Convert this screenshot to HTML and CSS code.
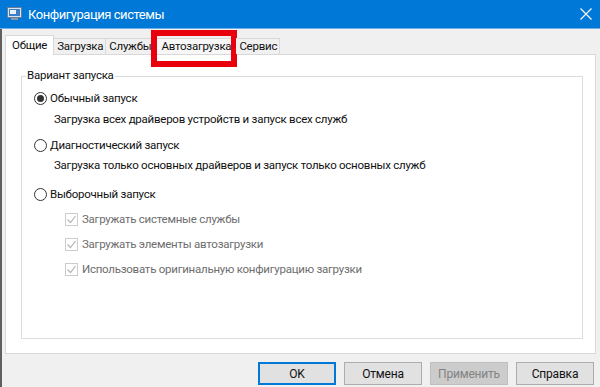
FILE: index.html
```html
<!DOCTYPE html>
<html lang="ru">
<head>
    <meta charset="UTF-8">
    <title>Конфигурация системы</title>
    <link rel="stylesheet" href="styles.css">
</head>
<body>
    <div class="window">
        <div class="titlebar">
            <svg class="app-icon" width="15" height="14" viewBox="0 0 15 14">
                <rect x="0.5" y="0.5" width="14" height="10" fill="#d8e4f0" stroke="#6a7f97"/>
                <rect x="2" y="2" width="11" height="7" fill="#3d7fc6"/>
                <rect x="3" y="3" width="6" height="4" fill="#e9f1fa"/>
                <rect x="4" y="11" width="7" height="2" fill="#8796a8"/>
            </svg>
            <span class="title">Конфигурация системы</span>
            <svg class="close" width="12" height="12" viewBox="0 0 12 12">
                <path d="M0.5 0.5 L11.5 11.5 M11.5 0.5 L0.5 11.5" stroke="#ffffff" stroke-width="1.1"/>
            </svg>
        </div>
        <div class="client">
            <div class="tabs">
                <div class="tab active">Общие</div>
                <div class="tab">Загрузка</div>
                <div class="tab">Службы</div>
                <div class="tab marked">Автозагрузка</div>
                <div class="tab">Сервис</div>
            </div>
            <div class="panel">
                <div class="group">
                    <span class="group-label">Вариант запуска</span>
                    <div class="option radio-row r1"><span class="radio checked"></span>Обычный запуск</div>
                    <div class="option desc d1">Загрузка всех драйверов устройств и запуск всех служб</div>
                    <div class="option radio-row r2"><span class="radio"></span>Диагностический запуск</div>
                    <div class="option desc d2">Загрузка только основных драйверов и запуск только основных служб</div>
                    <div class="option radio-row r3"><span class="radio"></span>Выборочный запуск</div>
                    <div class="option check-row c1"><span class="checkbox"><svg width="11" height="11" viewBox="0 0 11 11"><path d="M1.5 5.5 L4.5 8.5 L9.5 2" fill="none" stroke="#b5b5b5" stroke-width="1.2"/></svg></span>Загружать системные службы</div>
                    <div class="option check-row"><span class="checkbox"><svg width="11" height="11" viewBox="0 0 11 11"><path d="M1.5 5.5 L4.5 8.5 L9.5 2" fill="none" stroke="#b5b5b5" stroke-width="1.2"/></svg></span>Загружать элементы автозагрузки</div>
                    <div class="option check-row"><span class="checkbox"><svg width="11" height="11" viewBox="0 0 11 11"><path d="M1.5 5.5 L4.5 8.5 L9.5 2" fill="none" stroke="#b5b5b5" stroke-width="1.2"/></svg></span>Использовать оригинальную конфигурацию загрузки</div>
                </div>
            </div>
            <div class="buttons">
                <button class="btn default">OK</button>
                <button class="btn">Отмена</button>
                <button class="btn" disabled>Применить</button>
                <button class="btn">Справка</button>
            </div>
        </div>
    </div>
</body>
</html>
```

FILE: styles.css
```css
body {
    margin: 0;
    padding: 0;
    width: 600px;
    height: 387px;
    overflow: hidden;
    font-family: Roboto, "Noto Sans", sans-serif;
    font-size: 11.5px;
    letter-spacing: -0.25px;
    color: #111111;
    background: #f0f0f0;
}
.window {
    width: 600px;
    height: 387px;
    display: flex;
    flex-direction: column;
}
.titlebar {
    height: 28px;
    background: #0078d7;
    border-bottom: 1px solid #6fb0e8;
    display: flex;
    align-items: center;
    padding-left: 7px;
    padding-right: 8px;
}
.app-icon {
    margin-right: 6px;
}
.title {
    color: #ffffff;
    font-size: 13px;
    letter-spacing: -0.45px;
    flex: 1;
}
.client {
    flex: 1;
    background: #f0f0f0;
    border-left: 2px solid #5f5f5f;
    padding: 0 4px 0 3px;
    display: flex;
    flex-direction: column;
}
/* Tabs */
.tabs {
    display: flex;
    align-items: flex-end;
    height: 18px;
    margin-top: 7px;
}
.tab {
    height: 15px;
    line-height: 15px;
    padding: 0 2px 0 3px;
    border: 1px solid #d9d9d9;
    border-bottom: none;
    border-left: none;
    background: #f0f0f0;
    position: relative;
}
.tab.active {
    height: 19px;
    line-height: 19px;
    margin-bottom: -1px;
    background: #ffffff;
    border-left: 1px solid #d9d9d9;
    padding: 0 6px;
    z-index: 1;
}
.tab.marked {
    background: #f7f7f7;
    padding: 0 4px 0 7px;
}
/* red annotation frame */
.tab.marked::after {
    content: '';
    position: absolute;
    left: -3px;
    right: -2px;
    top: -9px;
    bottom: -13px;
    border: 6px solid #e8000c;
}
.panel {
    background: #ffffff;
    border: 1px solid #d9d9d9;
    padding: 21px 12px 0 15px;
    box-sizing: border-box;
    height: 300px;
}
.group {
    position: relative;
    border: 1px solid #dcdcdc;
    height: 263px;
    box-sizing: border-box;
    padding-top: 13px;
    padding-left: 12px;
}
.group-label {
    position: absolute;
    top: -9px;
    left: 4px;
    background: #ffffff;
    padding: 0 1px;
}
.option {
    height: 16px;
    line-height: 16px;
    display: flex;
    align-items: center;
    white-space: nowrap;
}
.radio {
    width: 11px;
    height: 11px;
    border: 1px solid #333333;
    border-radius: 50%;
    margin-right: 3px;
    position: relative;
    background: #ffffff;
}
.radio.checked::after {
    content: '';
    position: absolute;
    left: 2px;
    top: 2px;
    width: 7px;
    height: 7px;
    border-radius: 50%;
    background: #333333;
}
.desc {
    padding-left: 20px;
}
.d1 { margin-top: 5px; }
.r2 { margin-top: 10px; }
.d2 { margin-top: 4px; }
.r3 { margin-top: 13px; }
.check-row {
    margin-top: 9px;
    padding-left: 31px;
    color: #6d6d6d;
}
.checkbox {
    width: 11px;
    height: 11px;
    border: 1px solid #cccccc;
    margin-right: 4px;
    display: flex;
}
.buttons {
    display: flex;
    justify-content: flex-end;
    gap: 8px;
    padding-top: 8px;
    padding-right: 2px;
}
.btn {
    width: 78px;
    height: 23px;
    font-family: inherit;
    font-size: 12px;
    letter-spacing: -0.2px;
    color: #111111;
    background: #e1e1e1;
    border: 1px solid #adadad;
    padding: 0;
}
.btn.default {
    border: 2px solid #0078d7;
}
.btn:disabled {
    background: #cccccc;
    border-color: #bfbfbf;
    color: #838383;
}
```
